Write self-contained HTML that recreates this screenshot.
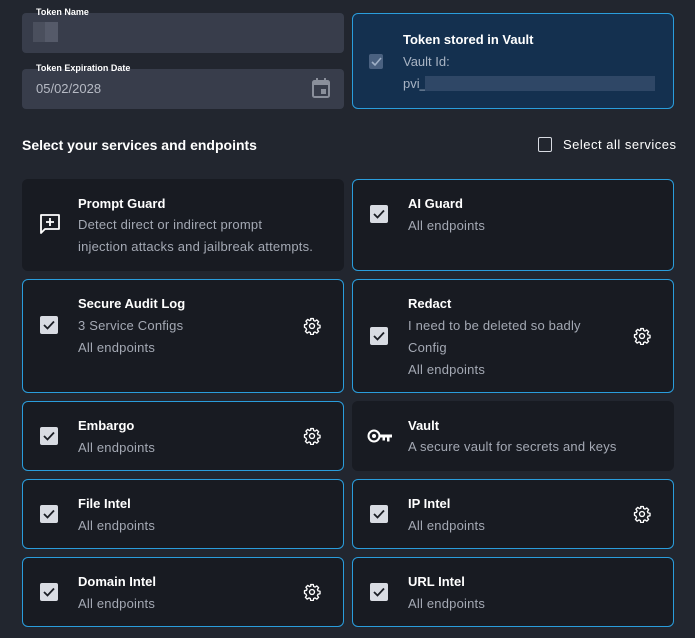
<!DOCTYPE html>
<html><head><style>
*{box-sizing:border-box;margin:0;padding:0}
body{width:695px;height:638px;background:#22262f;font-family:"Liberation Sans",sans-serif;position:relative;overflow:hidden;color:#fff}
.abs{position:absolute}
.inp{position:absolute;left:22px;width:322px;height:40px;background:#383d4b;border-radius:4px}
.lbl{position:absolute;left:36px;font-size:9px;font-weight:bold;color:#fff}
.card{position:absolute;width:322px;background:#181b22;border-radius:6px}
.sel{border:1px solid #2a9ddc}
.t{position:absolute;left:56px;font-size:13px;font-weight:bold;color:#fff}
.s{position:absolute;left:56px;font-size:13px;color:#a4a9b4;line-height:22px;letter-spacing:0.2px}
.sel .t,.sel .s{left:55px}
.sel .cb{left:17px}
.cb{position:absolute;left:18px;width:18px;height:18px;background:#d9dce3;border-radius:2px}
.cb svg{position:absolute;left:2px;top:2px}
.gear{position:absolute;right:22px}
</style></head><body>
<div class="inp" style="top:13px"></div>
<div class="abs" style="left:33px;top:22px;width:12px;height:20px;background:#4a4f5d"></div>
<div class="abs" style="left:45px;top:22px;width:13px;height:20px;background:#555a69"></div>
<div class="lbl" style="top:7px">Token Name</div>
<div class="inp" style="top:69px"></div>
<div class="lbl" style="top:63px">Token Expiration Date</div>
<div class="abs" style="left:36px;top:81px;font-size:13px;color:#b6bac4">05/02/2028</div>
<svg class="abs" style="left:312px;top:78px" width="18" height="20" viewBox="0 0 18 20"><rect x="1" y="3" width="16" height="16" rx="1.5" fill="none" stroke="#8a8f9b" stroke-width="2"/><rect x="1" y="3" width="16" height="4" fill="#8a8f9b"/><rect x="4" y="0" width="2" height="4" fill="#8a8f9b"/><rect x="12" y="0" width="2" height="4" fill="#8a8f9b"/><rect x="9" y="11" width="5" height="5" fill="#8a8f9b"/></svg>

<div class="abs" style="left:352px;top:13px;width:322px;height:96px;background:#14304f;border:1px solid #2a9ddc;border-radius:6px"></div>
<div class="abs" style="left:369px;top:54px;width:14px;height:15px;background:#4a6180;border-radius:2px"><svg width="14" height="15"><path d="M3 8l3 3 6-7" stroke="#9fb0c6" stroke-width="1.6" fill="none"/></svg></div>
<div class="abs" style="left:403px;top:32px;font-size:13px;font-weight:bold">Token stored in Vault</div>
<div class="abs" style="left:403px;top:54px;font-size:13px;color:#a9b4c4">Vault Id:</div>
<div class="abs" style="left:403px;top:76px;font-size:13px;color:#a9b4c4">pvi_</div>
<div class="abs" style="left:425px;top:76px;width:230px;height:15px;background:#2f4766"></div>

<div class="abs" style="left:22px;top:137px;font-size:14px;font-weight:bold">Select your services and endpoints</div>
<div class="abs" style="left:538px;top:137px;width:14px;height:15px;border:1.5px solid #d8dbe2;border-radius:2px"></div>
<div class="abs" style="left:563px;top:137px;font-size:13px;letter-spacing:0.5px">Select all services</div>

<!-- row1 -->
<div class="card" style="left:22px;top:179px;height:92px">
<svg class="abs" style="left:18px;top:35px" width="20" height="20" viewBox="0 0 20 20"><path d="M1 1h18v14H5l-4 4z" fill="none" stroke="#fff" stroke-width="1.8" stroke-linejoin="round"/><path d="M10 4v8M6 8h8" stroke="#fff" stroke-width="1.8"/></svg>
<div class="t" style="top:17px">Prompt Guard</div>
<div class="s" style="top:35px">Detect direct or indirect prompt<br>injection attacks and jailbreak attempts.</div>
</div>
<div class="card sel" style="left:352px;top:179px;height:92px">
<div class="cb" style="top:25px"><svg width="14" height="14"><path d="M2 7l3.5 3.5L12 3.5" stroke="#1b1e25" stroke-width="1.8" fill="none"/></svg></div>
<div class="t" style="top:16px">AI Guard</div>
<div class="s" style="top:35px">All endpoints</div>
</div>
<!-- row2 -->
<div class="card sel" style="left:22px;top:279px;height:114px">
<div class="cb" style="top:36px"><svg width="14" height="14"><path d="M2 7l3.5 3.5L12 3.5" stroke="#1b1e25" stroke-width="1.8" fill="none"/></svg></div>
<div class="t" style="top:16px">Secure Audit Log</div>
<div class="s" style="top:35px">3 Service Configs<br>All endpoints</div>
<svg class="gear" style="top:37px" width="18" height="18" viewBox="0 0 24 24"><path d="M10.3 2h3.4l.5 2.7 1.9.8 2.3-1.6 2.4 2.4-1.6 2.3.8 1.9 2.7.5v3.4l-2.7.5-.8 1.9 1.6 2.3-2.4 2.4-2.3-1.6-1.9.8-.5 2.7h-3.4l-.5-2.7-1.9-.8-2.3 1.6-2.4-2.4 1.6-2.3-.8-1.9L2 13.7v-3.4l2.7-.5.8-1.9-1.6-2.3 2.4-2.4 2.3 1.6 1.9-.8z" fill="none" stroke="#fff" stroke-width="1.8" stroke-linejoin="round"/><circle cx="12" cy="12" r="3.3" fill="none" stroke="#fff" stroke-width="1.8"/></svg>
</div>
<div class="card sel" style="left:352px;top:279px;height:114px">
<div class="cb" style="top:47px"><svg width="14" height="14"><path d="M2 7l3.5 3.5L12 3.5" stroke="#1b1e25" stroke-width="1.8" fill="none"/></svg></div>
<div class="t" style="top:16px">Redact</div>
<div class="s" style="top:35px">I need to be deleted so badly<br>Config<br>All endpoints</div>
<svg class="gear" style="top:47px" width="18" height="18" viewBox="0 0 24 24"><path d="M10.3 2h3.4l.5 2.7 1.9.8 2.3-1.6 2.4 2.4-1.6 2.3.8 1.9 2.7.5v3.4l-2.7.5-.8 1.9 1.6 2.3-2.4 2.4-2.3-1.6-1.9.8-.5 2.7h-3.4l-.5-2.7-1.9-.8-2.3 1.6-2.4-2.4 1.6-2.3-.8-1.9L2 13.7v-3.4l2.7-.5.8-1.9-1.6-2.3 2.4-2.4 2.3 1.6 1.9-.8z" fill="none" stroke="#fff" stroke-width="1.8" stroke-linejoin="round"/><circle cx="12" cy="12" r="3.3" fill="none" stroke="#fff" stroke-width="1.8"/></svg>
</div>
<!-- row3 -->
<div class="card sel" style="left:22px;top:401px;height:70px">
<div class="cb" style="top:25px"><svg width="14" height="14"><path d="M2 7l3.5 3.5L12 3.5" stroke="#1b1e25" stroke-width="1.8" fill="none"/></svg></div>
<div class="t" style="top:16px">Embargo</div>
<div class="s" style="top:35px">All endpoints</div>
<svg class="gear" style="top:25px" width="18" height="18" viewBox="0 0 24 24"><path d="M10.3 2h3.4l.5 2.7 1.9.8 2.3-1.6 2.4 2.4-1.6 2.3.8 1.9 2.7.5v3.4l-2.7.5-.8 1.9 1.6 2.3-2.4 2.4-2.3-1.6-1.9.8-.5 2.7h-3.4l-.5-2.7-1.9-.8-2.3 1.6-2.4-2.4 1.6-2.3-.8-1.9L2 13.7v-3.4l2.7-.5.8-1.9-1.6-2.3 2.4-2.4 2.3 1.6 1.9-.8z" fill="none" stroke="#fff" stroke-width="1.8" stroke-linejoin="round"/><circle cx="12" cy="12" r="3.3" fill="none" stroke="#fff" stroke-width="1.8"/></svg>
</div>
<div class="card" style="left:352px;top:401px;height:70px">
<svg class="abs" style="left:15px;top:28px" width="26" height="14" viewBox="0 0 26 14"><circle cx="7" cy="7" r="5.5" fill="none" stroke="#fff" stroke-width="2"/><circle cx="7" cy="7" r="2" fill="#fff"/><path d="M12.5 5.5H25v3h-2.5v4h-2.5v-4h-2v3h-2.5v-3h-3z" fill="#fff"/></svg>
<div class="t" style="top:17px">Vault</div>
<div class="s" style="top:35px">A secure vault for secrets and keys</div>
</div>
<!-- row4 -->
<div class="card sel" style="left:22px;top:479px;height:70px">
<div class="cb" style="top:25px"><svg width="14" height="14"><path d="M2 7l3.5 3.5L12 3.5" stroke="#1b1e25" stroke-width="1.8" fill="none"/></svg></div>
<div class="t" style="top:16px">File Intel</div>
<div class="s" style="top:35px">All endpoints</div>
</div>
<div class="card sel" style="left:352px;top:479px;height:70px">
<div class="cb" style="top:25px"><svg width="14" height="14"><path d="M2 7l3.5 3.5L12 3.5" stroke="#1b1e25" stroke-width="1.8" fill="none"/></svg></div>
<div class="t" style="top:16px">IP Intel</div>
<div class="s" style="top:35px">All endpoints</div>
<svg class="gear" style="top:25px" width="18" height="18" viewBox="0 0 24 24"><path d="M10.3 2h3.4l.5 2.7 1.9.8 2.3-1.6 2.4 2.4-1.6 2.3.8 1.9 2.7.5v3.4l-2.7.5-.8 1.9 1.6 2.3-2.4 2.4-2.3-1.6-1.9.8-.5 2.7h-3.4l-.5-2.7-1.9-.8-2.3 1.6-2.4-2.4 1.6-2.3-.8-1.9L2 13.7v-3.4l2.7-.5.8-1.9-1.6-2.3 2.4-2.4 2.3 1.6 1.9-.8z" fill="none" stroke="#fff" stroke-width="1.8" stroke-linejoin="round"/><circle cx="12" cy="12" r="3.3" fill="none" stroke="#fff" stroke-width="1.8"/></svg>
</div>
<!-- row5 -->
<div class="card sel" style="left:22px;top:557px;height:70px">
<div class="cb" style="top:25px"><svg width="14" height="14"><path d="M2 7l3.5 3.5L12 3.5" stroke="#1b1e25" stroke-width="1.8" fill="none"/></svg></div>
<div class="t" style="top:16px">Domain Intel</div>
<div class="s" style="top:35px">All endpoints</div>
<svg class="gear" style="top:25px" width="18" height="18" viewBox="0 0 24 24"><path d="M10.3 2h3.4l.5 2.7 1.9.8 2.3-1.6 2.4 2.4-1.6 2.3.8 1.9 2.7.5v3.4l-2.7.5-.8 1.9 1.6 2.3-2.4 2.4-2.3-1.6-1.9.8-.5 2.7h-3.4l-.5-2.7-1.9-.8-2.3 1.6-2.4-2.4 1.6-2.3-.8-1.9L2 13.7v-3.4l2.7-.5.8-1.9-1.6-2.3 2.4-2.4 2.3 1.6 1.9-.8z" fill="none" stroke="#fff" stroke-width="1.8" stroke-linejoin="round"/><circle cx="12" cy="12" r="3.3" fill="none" stroke="#fff" stroke-width="1.8"/></svg>
</div>
<div class="card sel" style="left:352px;top:557px;height:70px">
<div class="cb" style="top:25px"><svg width="14" height="14"><path d="M2 7l3.5 3.5L12 3.5" stroke="#1b1e25" stroke-width="1.8" fill="none"/></svg></div>
<div class="t" style="top:16px">URL Intel</div>
<div class="s" style="top:35px">All endpoints</div>
</div>
</body></html>
